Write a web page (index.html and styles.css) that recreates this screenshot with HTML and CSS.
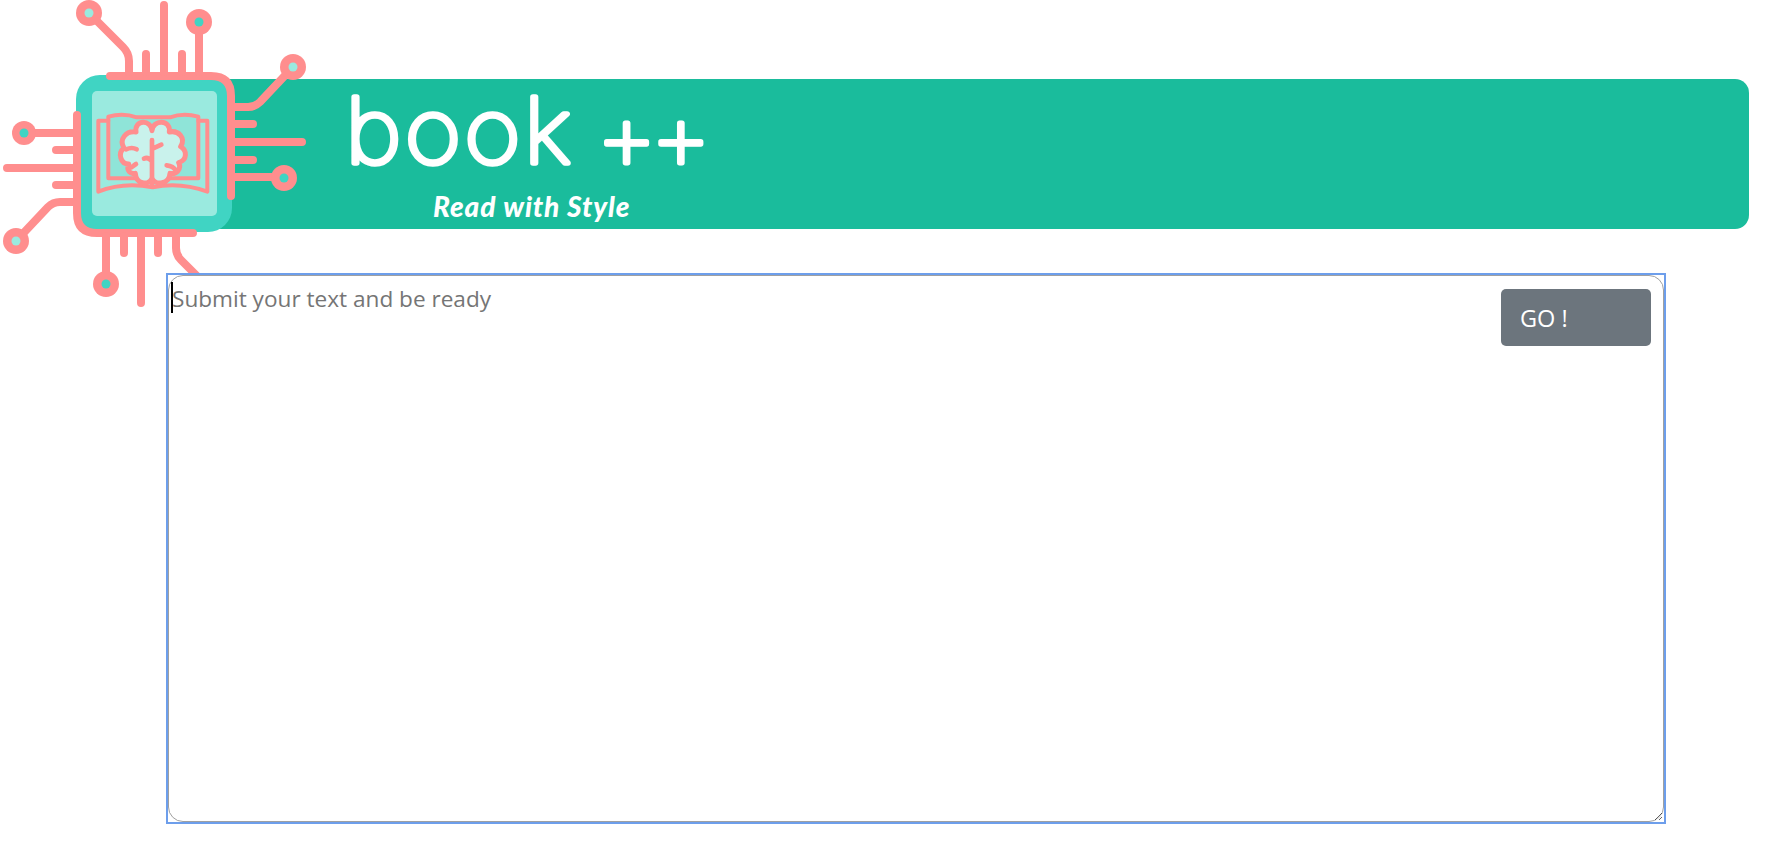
FILE: index.html
```html
<!DOCTYPE html>
<html lang="en">
<head>
    <meta charset="UTF-8">
    <title>book ++</title>
    <link rel="stylesheet" href="styles.css">
</head>
<body>

<header class="banner">
    <svg class="logo" viewBox="0 0 320 310" width="320" height="310" aria-hidden="true">
        <rect class="chip" x="76" y="75" width="156" height="157" rx="24"/>
        <rect class="chip-inner" x="92" y="91" width="125" height="125" rx="5"/>

        <g class="trace">
            <path d="M110 76H211Q231 76 231 96V196"/>
            <path d="M77 115V213Q77 233 97 233H193"/>
            <!-- top -->
            <path d="M89 13L123 47Q129 53 129 61V72"/>
            <path d="M146 54V72M164 5V72M182 54V72M199 22V72"/>
            <!-- right -->
            <path d="M235 107H248Q255 107 260 102L293 67"/>
            <path d="M235 124H253M235 142H302M235 160H253M235 177H284"/>
            <!-- bottom -->
            <path d="M106 236V284M124 236V253M141 236V303M158 236V253"/>
            <path d="M176 236V248Q176 255 181 260L200 279"/>
            <!-- left -->
            <path d="M24 133H73M56 150H73M7 168H73M56 185H73"/>
            <path d="M73 202H60Q53 202 48 207L16 241"/>
        </g>

        <g class="pad">
            <circle cx="89" cy="13" r="13"/>
            <circle cx="199" cy="22" r="13"/>
            <circle cx="293" cy="67" r="13"/>
            <circle cx="284" cy="178" r="13"/>
            <circle cx="106" cy="284" r="13"/>
            <circle cx="24" cy="133" r="12"/>
            <circle cx="16" cy="241" r="13"/>
        </g>
        <circle class="dot-light" cx="89" cy="13" r="4.5"/>
        <circle class="dot-dark" cx="199" cy="22" r="4.5"/>
        <circle class="dot-light" cx="293" cy="67" r="4.5"/>
        <circle class="dot-dark" cx="284" cy="178" r="4.5"/>
        <circle class="dot-dark" cx="106" cy="284" r="4.5"/>
        <circle class="dot-dark" cx="24" cy="133" r="4.5"/>
        <circle class="dot-light" cx="16" cy="241" r="4.5"/>

        <!-- open book with the brain on it, drawn in the zoomed coordinates -->
        <g class="book" transform="translate(80 80) scale(.3333)">
            <path class="page" d="M85 295V110Q130 98 170 112L270 112Q310 98 355 110V295H270L170 295Z"/>
            <path d="M85 122H55V335Q130 305 218 322Q300 305 382 335V122H355"/>
            <path class="brain" d="M216 152C214 118 162 118 168 156C138 152 116 178 132 204C112 220 122 252 146 252C138 272 152 284 166 280C168 312 204 318 216 296C228 318 268 312 270 280C288 284 306 268 296 248C322 240 322 212 302 200C318 174 296 150 268 156C274 118 218 118 216 152Z"/>
            <path class="fold" d="M216 180V314M218 206L244 194M138 208Q156 200 170 208M192 236Q204 230 214 242M154 262L168 252M260 256Q280 258 288 272"/>
        </g>
    </svg>

    <div class="brand">
        <svg class="brand-name" width="400" height="125">
            <text transform="translate(5 96) scale(1.08 1)">book</text>
            <text class="plus" x="256" y="103">++</text>
        </svg>
        <p class="brand-tag">Read with Style</p>
    </div>
</header>

<main class="submit-box">
    <textarea class="submit-text" placeholder="Submit your text and be ready"></textarea>
    <span class="caret"></span>
    <button class="go" type="button">GO !</button>
</main>

</body>
</html>
```

FILE: styles.css
```css
body {
    margin: 0;
    min-height: 868px;
    background-color: #fff;
    font-family: "Open Sans", "Noto Sans", sans-serif;
}

.banner {
    display: flex;
    height: 150px;
    margin: 79px 37px 0 190px;
    padding-left: 150px;
    background-color: #1abc9c;
    border-radius: 14px;
}

.logo {
    position: absolute;
    top: 0;
    left: 0;
}
.chip { fill: #40d4c3; }
.chip-inner { fill: #9aeadf; }
.trace path {
    fill: none;
    stroke: #ff8e8e;
    stroke-width: 8;
    stroke-linecap: round;
    stroke-linejoin: round;
}
.pad circle { fill: #ff8e8e; }
.dot-light { fill: #9aeadf; }
.dot-dark { fill: #40d4c3; }
.book path {
    fill: none;
    stroke: #ff8e8e;
    stroke-width: 12;
    stroke-linecap: round;
    stroke-linejoin: round;
}
.book .page { fill: #8fe4d8; }
.book .brain {
    fill: #c9f2ec;
    stroke-width: 15;
}
.book .fold { stroke-width: 14; }

.brand {
    display: flex;
    flex-direction: column;
    color: #fff;
}
.brand-name {
    display: block;
    flex: none;
    margin: -12px 0 -8px;
}
.brand-name text {
    font-family: "Inter", sans-serif;
    font-size: 90px;
    font-weight: 100;
    letter-spacing: 3px;
    fill: #fff;
    stroke: #fff;
    stroke-width: 5.5;
    stroke-linejoin: round;
}
.brand-name .plus {
    font-size: 96px;
    letter-spacing: -7px;
}
.brand-tag {
    margin: 5px 0 0 93px;
    font-family: "Lato", sans-serif;
    font-size: 28px;
    font-style: italic;
    font-weight: 900;
    letter-spacing: .9px;
    line-height: 34px;
}

.submit-box {
    position: relative;
    width: 1496px;
    height: 547px;
    margin: 46px 0 0 168px;
    outline: 2px solid #6d9eeb;
    background-color: #fff;
}
.submit-text {
    display: block;
    box-sizing: border-box;
    width: 100%;
    height: 100%;
    padding: 7px 3px;
    border: 1px solid #a0a0a0;
    border-radius: 15px;
    outline: none;
    font-family: inherit;
    font-size: 22.6px;
    line-height: 32px;
}
.submit-text::placeholder {
    color: #757575;
}
.caret {
    position: absolute;
    top: 7px;
    left: 3px;
    width: 2px;
    height: 31px;
    background-color: #000;
}
.go {
    position: absolute;
    top: 14px;
    right: 13px;
    width: 150px;
    height: 57px;
    padding: 0 0 0 19px;
    border: none;
    border-radius: 5px;
    background-color: #6c757d;
    color: #fff;
    font-family: inherit;
    font-size: 23.5px;
    text-align: left;
    cursor: pointer;
}
```
